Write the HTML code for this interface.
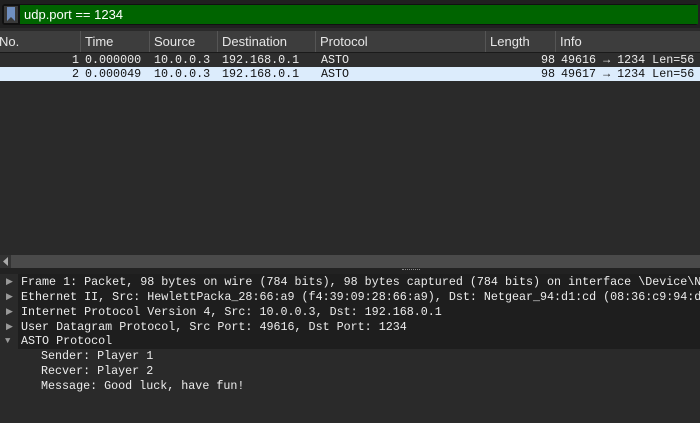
<!DOCTYPE html>
<html><head><style>
body{margin:0;width:700px;height:423px;background:#2a2a2a;overflow:hidden;position:relative;font-family:"Liberation Sans",sans-serif}
.abs{position:absolute}
.mono{font-family:"Liberation Mono",monospace;font-size:11.7px;white-space:pre}
.hdr{top:31px;left:0;width:700px;height:21px;background:#3d3d3d;border-bottom:1px solid #1a1a1a}
.hc{position:absolute;top:0;height:21px;line-height:21px;color:#e6e6e6;font-size:13px;border-left:1px solid #555;padding-left:4px}
.row{left:0;width:700px;height:14px;line-height:14px}
.c{position:absolute;top:0}
.tr{position:absolute;left:0;width:700px;height:15px;line-height:15px;color:#ececec;font-family:"Liberation Mono",monospace;font-size:11.7px;white-space:pre}
.ar{position:absolute;left:6px;color:#999;font-size:9px}
.tx{position:absolute;left:21px}
</style></head><body>
<div class="abs" style="top:0;left:0;width:700px;height:28px;background:#202020"></div>
<div class="abs" style="top:4px;left:2px;width:696px;height:21px;background:#111;border-radius:3px"></div>
<div class="abs" style="top:6px;left:4px;width:14px;height:17px;background:#3a3a3a"></div>
<svg class="abs" style="top:7px;left:6px" width="10" height="15"><path d="M1 0H9V14L5 10L1 14Z" fill="#6f8fc0"/></svg>
<div class="abs" style="top:5px;left:20px;width:678px;height:19px;background:#006400"></div>
<div class="abs" style="top:5px;left:24px;height:19px;line-height:19px;color:#fff;font-size:13px">udp.port == 1234</div>
<div class="abs hdr">
<div class="hc" style="left:-5px;border:none;padding-left:4px">No.</div>
<div class="hc" style="left:80px">Time</div>
<div class="hc" style="left:149px">Source</div>
<div class="hc" style="left:217px">Destination</div>
<div class="hc" style="left:315px">Protocol</div>
<div class="hc" style="left:485px">Length</div>
<div class="hc" style="left:555px">Info</div>
</div>
<div class="abs row mono" style="top:53px;background:#2e2e2e;color:#ececec"><span class="c" style="left:72px">1</span><span class="c" style="left:85px">0.000000</span><span class="c" style="left:154px">10.0.0.3</span><span class="c" style="left:222px">192.168.0.1</span><span class="c" style="left:321px">ASTO</span><span class="c" style="left:541px">98</span><span class="c" style="left:561px">49616 → 1234 Len=56</span></div>
<div class="abs row mono" style="top:67px;background:#dcecfc;color:#111"><span class="c" style="left:72px">2</span><span class="c" style="left:85px">0.000049</span><span class="c" style="left:154px">10.0.0.3</span><span class="c" style="left:222px">192.168.0.1</span><span class="c" style="left:321px">ASTO</span><span class="c" style="left:541px">98</span><span class="c" style="left:561px">49617 → 1234 Len=56</span></div>
<div class="abs" style="top:255px;left:0;width:700px;height:13px;background:#4a4a4a"></div>
<div class="abs" style="top:255px;left:0;width:11px;height:13px;background:#333"></div>
<svg class="abs" style="top:257px;left:2px" width="8" height="9"><path d="M6 0V9L1 4.5Z" fill="#aaa"/></svg>
<div class="abs" style="top:268px;left:0;width:700px;height:6px;background:#222"></div>
<div class="abs" style="top:269px;left:402px;width:18px;height:2px;border-top:1px dotted #888"></div>
<div class="abs" style="top:274px;left:18px;width:682px;height:75px;background:#1e1e1e"></div>
<div class="tr" style="top:275px"><span class="ar">▶</span><span class="tx">Frame 1: Packet, 98 bytes on wire (784 bits), 98 bytes captured (784 bits) on interface \Device\N</span></div>
<div class="tr" style="top:290px"><span class="ar">▶</span><span class="tx">Ethernet II, Src: HewlettPacka_28:66:a9 (f4:39:09:28:66:a9), Dst: Netgear_94:d1:cd (08:36:c9:94:d</span></div>
<div class="tr" style="top:305px"><span class="ar">▶</span><span class="tx">Internet Protocol Version 4, Src: 10.0.0.3, Dst: 192.168.0.1</span></div>
<div class="tr" style="top:320px"><span class="ar">▶</span><span class="tx">User Datagram Protocol, Src Port: 49616, Dst Port: 1234</span></div>
<div class="tr" style="top:334px"><span class="ar" style="left:5px">▼</span><span class="tx">ASTO Protocol</span></div>
<div class="tr" style="top:349px"><span class="tx" style="left:41px">Sender: Player 1</span></div>
<div class="tr" style="top:364px"><span class="tx" style="left:41px">Recver: Player 2</span></div>
<div class="tr" style="top:379px"><span class="tx" style="left:41px">Message: Good luck, have fun!</span></div>
</body></html>
